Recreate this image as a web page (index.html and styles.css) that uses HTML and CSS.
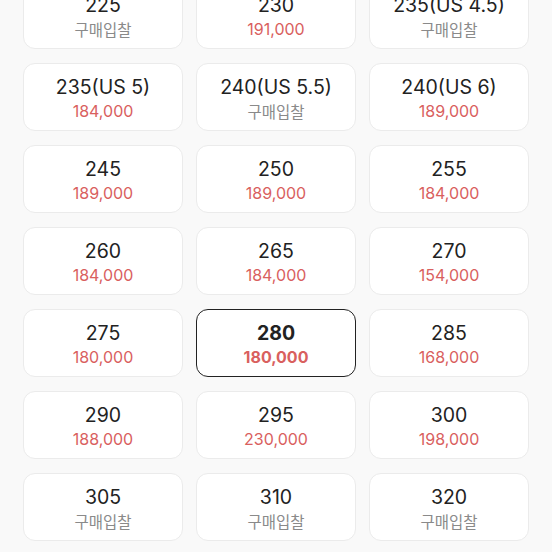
FILE: index.html
```html
<!DOCTYPE html>
<html lang="ko">
  <head>
    <meta charset="UTF-8" />
    <meta name="viewport" content="width=device-width, initial-scale=1.0" />
    <title>사이즈 선택</title>
    <link rel="stylesheet" href="styles.css">
  </head>
  <body>
    <div class="size-grid">
      <div class="size-card"><span class="size">225</span><span class="bid">구매입찰</span></div>
      <div class="size-card"><span class="size">230</span><span class="price">191,000</span></div>
      <div class="size-card"><span class="size">235(US 4.5)</span><span class="bid">구매입찰</span></div>

      <div class="size-card"><span class="size">235(US 5)</span><span class="price">184,000</span></div>
      <div class="size-card"><span class="size">240(US 5.5)</span><span class="bid">구매입찰</span></div>
      <div class="size-card"><span class="size">240(US 6)</span><span class="price">189,000</span></div>

      <div class="size-card"><span class="size">245</span><span class="price">189,000</span></div>
      <div class="size-card"><span class="size">250</span><span class="price">189,000</span></div>
      <div class="size-card"><span class="size">255</span><span class="price">184,000</span></div>

      <div class="size-card"><span class="size">260</span><span class="price">184,000</span></div>
      <div class="size-card"><span class="size">265</span><span class="price">184,000</span></div>
      <div class="size-card"><span class="size">270</span><span class="price">154,000</span></div>

      <div class="size-card"><span class="size">275</span><span class="price">180,000</span></div>
      <div class="size-card selected"><span class="size">280</span><span class="price">180,000</span></div>
      <div class="size-card"><span class="size">285</span><span class="price">168,000</span></div>

      <div class="size-card"><span class="size">290</span><span class="price">188,000</span></div>
      <div class="size-card"><span class="size">295</span><span class="price">230,000</span></div>
      <div class="size-card"><span class="size">300</span><span class="price">198,000</span></div>

      <div class="size-card"><span class="size">305</span><span class="bid">구매입찰</span></div>
      <div class="size-card"><span class="size">310</span><span class="bid">구매입찰</span></div>
      <div class="size-card"><span class="size">320</span><span class="bid">구매입찰</span></div>
    </div>
  </body>
</html>
```

FILE: styles.css
```css
body {
  margin: 0;
  height: 100vh;
  overflow: hidden;
  background-color: #f9f9f9;
  font-family: Inter, "Noto Sans CJK KR", sans-serif;
}

.size-grid {
  display: grid;
  grid-template-columns: repeat(3, 1fr);
  column-gap: 13px;
  row-gap: 14px;
  padding: 0 23px;
  margin-top: -19px;
}

.size-card {
  height: 68px;
  box-sizing: border-box;
  padding-top: 3px;
  background-color: #fff;
  border: 1px solid #ebebeb;
  border-radius: 12px;
  display: flex;
  flex-direction: column;
  justify-content: center;
  align-items: center;
}

.size {
  font-size: 19.5px;
  line-height: 24px;
  color: #222;
}

.price {
  font-size: 16px;
  line-height: 24px;
  color: #d9605e;
}

.bid {
  font-family: "Noto Sans CJK KR", sans-serif;
  font-size: 15.5px;
  line-height: 24px;
  color: #8a8a8a;
}

.size-card.selected {
  border: 1.5px solid #222;
}

.size-card.selected .size,
.size-card.selected .price {
  font-weight: 700;
}
```
